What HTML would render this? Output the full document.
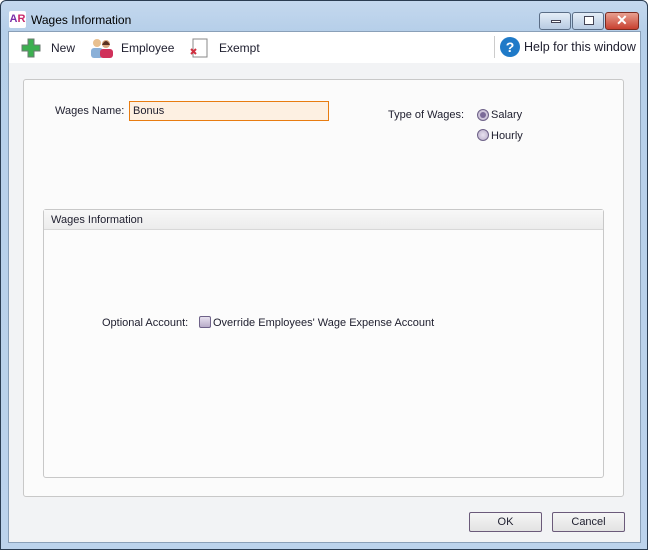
<!DOCTYPE html>
<html><head><style>
*{margin:0;padding:0;box-sizing:border-box}
body{width:648px;height:550px;overflow:hidden;font-family:"Liberation Sans",sans-serif;font-size:11px;color:#1e1e2e;background:#fff}
.win{position:absolute;left:0;top:0;width:648px;height:550px;border:1px solid #2b3d52;border-radius:6px 6px 0 0;background:linear-gradient(#c4d8ee,#b6cfe9 30px,#bcd3ec);}
.client{position:absolute;left:7px;top:30px;width:633px;height:512px;background:#f2f3f5;border:1px solid #8aa0b8}
.tb{position:absolute;left:0;top:0;width:631px;height:31px;background:#fff}
.t{position:absolute;white-space:nowrap}
.btn{position:absolute;height:20px;border:1px solid #6b5a7a;border-radius:2px;background:linear-gradient(#f6f6f6,#e2e2e2);text-align:center;line-height:18px}
.radio{position:absolute;width:12px;height:12px;border-radius:50%;border:1px solid #6e6288;background:radial-gradient(#e8e2f0,#b8acc8)}
.cap{position:absolute;top:11px;height:18px;border:1px solid #5a6d86;border-radius:3px;background:linear-gradient(#e4edf7,#b8cbe2)}
</style></head><body>
<div class="win">
 <div class="t" style="left:8px;top:10px;width:17px;height:17px;background:#fff;border-radius:2px;font-weight:bold;font-size:11px;line-height:17px;text-align:center"><span style="color:#7a2ea8">A</span><span style="color:#c8286a">R</span></div>
 <div class="t" style="left:30px;top:12px;font-size:12px;color:#000">Wages Information</div>
 <div class="cap" style="left:538px;width:32px"><div style="position:absolute;left:11px;top:7px;width:10px;height:3px;background:#fff;border:1px solid #445"></div></div>
 <div class="cap" style="left:571px;width:32px"><div style="position:absolute;left:11px;top:3px;width:10px;height:9px;border:1px solid #445;background:#fff"></div></div>
 <div class="cap" style="left:604px;width:34px;border-color:#7a2a20;background:linear-gradient(#e8a090,#c84030)"><div style="position:absolute;left:10px;top:-1px;color:#fff;font-weight:bold;font-size:14px">✕</div></div>
 <div class="client">
  <div class="tb">
   <svg class="t" style="left:12px;top:6px" width="20" height="20"><path d="M7 1h6v6h6v6h-6v6H7v-6H1V7h6z" fill="#3cb050" stroke="#6a7a70"/></svg>
   <div class="t" style="left:42px;top:9px;font-size:12px">New</div>
   <svg class="t" style="left:80px;top:5px" width="26" height="22"><circle cx="8" cy="6" r="4" fill="#e8c090"/><rect x="2" y="11" width="12" height="10" rx="3" fill="#8ab0d8"/><circle cx="17" cy="7" r="4" fill="#d8a880"/><path d="M13 8q4-8 8 0z" fill="#5a3020"/><rect x="11" y="12" width="13" height="9" rx="3" fill="#d0305a"/></svg>
   <div class="t" style="left:112px;top:9px;font-size:12px">Employee</div>
   <svg class="t" style="left:180px;top:5px" width="20" height="22"><rect x="4" y="2" width="14" height="18" fill="#fff" stroke="#888"/><path d="M2 12l5 5M7 12l-5 5" stroke="#d03040" stroke-width="2"/></svg>
   <div class="t" style="left:210px;top:9px;font-size:12px">Exempt</div>
   <div class="t" style="left:485px;top:4px;width:1px;height:22px;background:#ccc"></div>
   <div class="t" style="left:491px;top:5px;width:20px;height:20px;border-radius:50%;background:#1f7ac8;color:#fff;font-weight:bold;font-size:14px;text-align:center;line-height:20px">?</div>
   <div class="t" style="left:515px;top:8px;font-size:12.5px">Help for this window</div>
  </div>
  <div style="position:absolute;left:14px;top:47px;width:601px;height:418px;background:#fbfbfb;border:1px solid #c8c8c8;border-radius:3px">
   <div class="t" style="left:31px;top:25px">Wages Name:</div>
   <div class="t" style="left:105px;top:21px;width:200px;height:20px;border:1px solid #e87c10;background:#fdf0e2;padding:3px 3px">Bonus</div>
   <div class="t" style="left:364px;top:29px">Type of Wages:</div>
   <div class="radio" style="left:453px;top:29px"><div style="position:absolute;left:2px;top:2px;width:6px;height:6px;border-radius:50%;background:#7a6a98"></div></div>
   <div class="t" style="left:467px;top:29px">Salary</div>
   <div class="radio" style="left:453px;top:49px"></div>
   <div class="t" style="left:467px;top:50px">Hourly</div>
   <div style="position:absolute;left:19px;top:129px;width:561px;height:269px;border:1px solid #c8c8c8;border-radius:3px;background:#fcfcfc">
    <div style="height:20px;background:linear-gradient(#f8f8f8,#ececec);border-bottom:1px solid #d8d8d8;padding:4px 7px">Wages Information</div>
    <div class="t" style="left:58px;top:107px">Optional Account:</div>
    <div class="t" style="left:155px;top:106px;width:12px;height:12px;border:1px solid #6e6288;border-radius:2px;background:linear-gradient(#e8e2f0,#b8acc8)"></div>
    <div class="t" style="left:169px;top:107px">Override Employees' Wage Expense Account</div>
   </div>
  </div>
  <div class="btn" style="left:460px;top:480px;width:73px">OK</div>
  <div class="btn" style="left:543px;top:480px;width:73px">Cancel</div>
 </div>
</div>
</body></html>
